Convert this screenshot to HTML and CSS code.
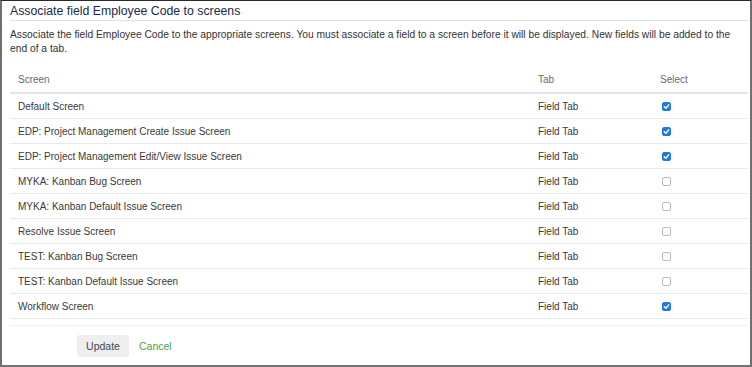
FILE: index.html
```html
<!DOCTYPE html>
<html lang="en">
<head>
    <meta charset="UTF-8">
    <meta name="viewport" content="width=device-width, initial-scale=1.0">
    <title>Associate field to screens</title>
    <link rel="stylesheet" href="styles.css">
</head>
<body>
    <div class="frame">
        <h2 class="title">Associate field Employee Code to screens</h2>
        <p class="desc">Associate the field Employee Code to the appropriate screens. You must associate a field to a screen before it will be displayed. New fields will be added to the end of a tab.</p>
        <form class="assoc-form">
            <table class="screens">
                <thead>
                    <tr><th>Screen</th><th class="col-tab">Tab</th><th class="col-select">Select</th></tr>
                </thead>
                <tbody>
                    <tr><td>Default Screen</td><td>Field Tab</td><td><span class="check on"><svg viewBox="0 0 10 10"><path d="M2.6 5.2 L4.3 6.9 L7.5 3.2" /></svg></span></td></tr>
                    <tr><td>EDP: Project Management Create Issue Screen</td><td>Field Tab</td><td><span class="check on"><svg viewBox="0 0 10 10"><path d="M2.6 5.2 L4.3 6.9 L7.5 3.2" /></svg></span></td></tr>
                    <tr><td>EDP: Project Management Edit/View Issue Screen</td><td>Field Tab</td><td><span class="check on"><svg viewBox="0 0 10 10"><path d="M2.6 5.2 L4.3 6.9 L7.5 3.2" /></svg></span></td></tr>
                    <tr><td>MYKA: Kanban Bug Screen</td><td>Field Tab</td><td><span class="check"></span></td></tr>
                    <tr><td>MYKA: Kanban Default Issue Screen</td><td>Field Tab</td><td><span class="check"></span></td></tr>
                    <tr><td>Resolve Issue Screen</td><td>Field Tab</td><td><span class="check"></span></td></tr>
                    <tr><td>TEST: Kanban Bug Screen</td><td>Field Tab</td><td><span class="check"></span></td></tr>
                    <tr><td>TEST: Kanban Default Issue Screen</td><td>Field Tab</td><td><span class="check"></span></td></tr>
                    <tr><td>Workflow Screen</td><td>Field Tab</td><td><span class="check on"><svg viewBox="0 0 10 10"><path d="M2.6 5.2 L4.3 6.9 L7.5 3.2" /></svg></span></td></tr>
                </tbody>
            </table>
            <div class="buttons">
                <button type="button" class="btn-update">Update</button>
                <a href="#" class="btn-cancel">Cancel</a>
            </div>
        </form>
    </div>
</body>
</html>
```

FILE: styles.css
```css
html, body {
    margin: 0;
    height: 100%;
}
body {
    font-family: "Liberation Sans", Arial, sans-serif;
    color: #333;
    background-color: #fff;
}
.frame { /* marco de la ventana */
    box-sizing: border-box;
    height: 367px;
    border: 2px solid #707070;
    border-top: 1px solid #2a2a2a;
    padding: 0 2px 0 8px;
}
.title {
    margin: 0;
    padding: 3px 0 1px 0;
    font-size: 12.3px;
    font-weight: normal;
    line-height: 15px;
    color: #172b4d;
    border-bottom: 1px solid #dfe1e6;
}
.desc {
    margin: 7px 0 0 0;
    font-size: 10.25px;
    line-height: 14px;
    color: #333;
}
.screens {
    width: 100%;
    margin-top: 10px;
    border-collapse: collapse;
    font-size: 10px;
}
.screens th {
    text-align: left;
    font-weight: normal;
    color: #6b6b6b;
    height: 26px;
    padding: 0 0 0 8px;
    border-bottom: 2px solid #e4e5e8;
}
.screens td {
    height: 24px;
    padding: 0 0 0 8px;
    border-bottom: 1px solid #e8e9ec;
    color: #3a3a3a;
}
.screens .col-tab {
    width: 114px;
}
.screens .col-select {
    width: 88px;
}
.check { /* casilla de seleccion */
    display: inline-block;
    box-sizing: border-box;
    width: 9px;
    height: 9px;
    margin-left: 2px;
    border: 1px solid #b9b9b9;
    border-radius: 2px;
    background: #fff;
    vertical-align: middle;
}
.check.on {
    background: #1f7ae6;
    border-color: #1f7ae6;
}
.check svg {
    display: block;
    width: 9px;
    height: 9px;
    margin: -1px 0 0 -1px;
}
.check svg path {
    fill: none;
    stroke: #fff;
    stroke-width: 1.6;
    stroke-linecap: round;
    stroke-linejoin: round;
}
.buttons {
    margin-top: 6px;
    border-top: 1px solid #eceef1;
    padding: 9px 0 0 67px;
    display: flex;
    align-items: center;
    gap: 10px;
}
.btn-update {
    height: 22px;
    width: 52px;
    border: none;
    border-radius: 3px;
    background-color: #eeeeef;
    color: #42474f;
    font-family: inherit;
    font-size: 10.5px;
    padding: 0;
}
.btn-cancel {
    color: #4aa33a;
    text-decoration: none;
    font-size: 10.5px;
}
```
